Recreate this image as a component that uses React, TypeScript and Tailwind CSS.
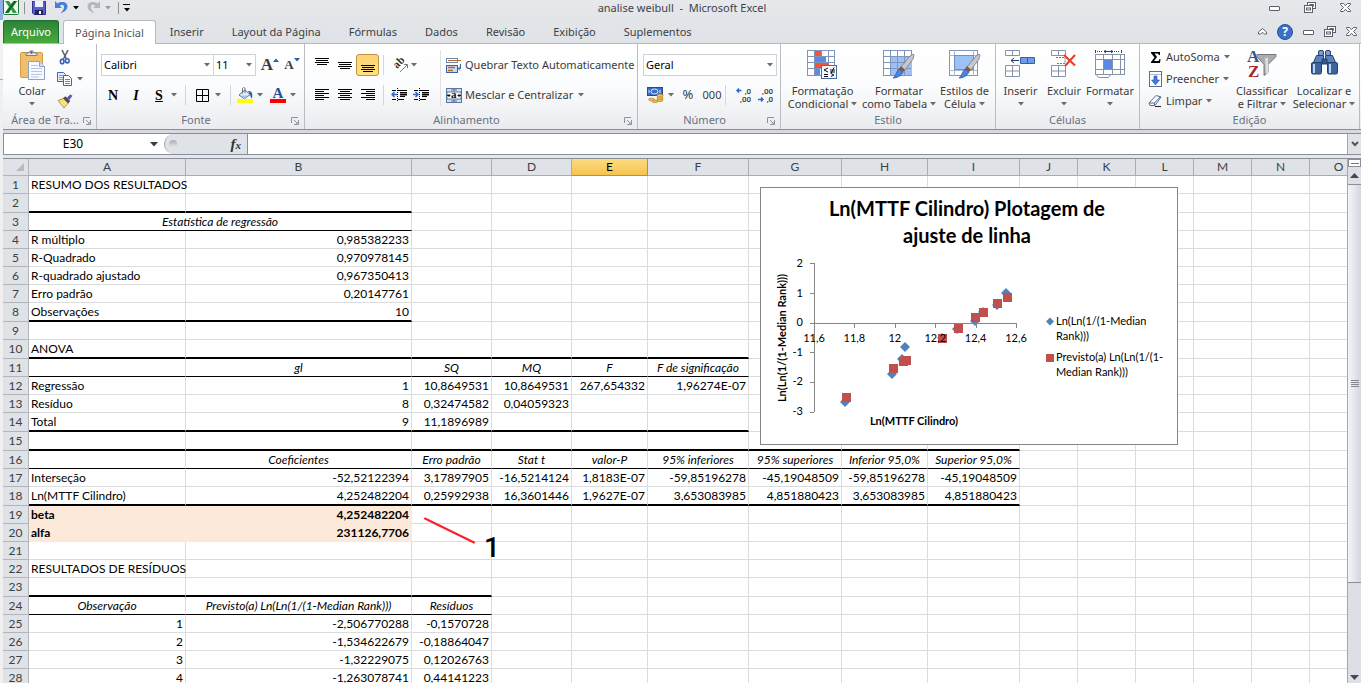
// src/App.tsx
import React from 'react';

/* ---------- small pieces ---------- */

const Arrow = ({ className = 'text-[#6b6b6b]' }: { className?: string }) => (
  <svg width="6" height="4" viewBox="0 0 6 4" className={`shrink-0 ${className}`} aria-hidden="true">
    <path d="M0 0h6L3 3.5z" fill="currentColor" />
  </svg>
);

const Sep = () => (
  <div className="w-px h-5 shrink-0 bg-[#d3d6da]" />
);

interface IconButtonProps {
  label: string;
  className: string;
  children: React.ReactNode;
}

function IconButton({ label, className, children }: IconButtonProps) {
  return (
    <button aria-label={label} className={`h-[22px] shrink-0 flex items-center justify-center ${className}`}>
      {children}
    </button>
  );
}

interface BigButtonProps {
  icon: React.ReactNode;
  lines: string[];
  className: string;
}

// Tall ribbon button: icon, one or two lines, drop arrow
function BigButton({ icon, lines, className }: BigButtonProps) {
  const two = lines.length > 1;
  return (
    <button className={`flex flex-col items-center shrink-0 pt-1.5 leading-[13px] whitespace-nowrap ${className}`}>
      <span className="h-[34px] flex items-start justify-center">{icon}</span>
      <span>{lines[0]}</span>
      <span className="h-[13px] flex items-center gap-[3px]">
        {two && lines[1]}
        <Arrow />
      </span>
    </button>
  );
}

interface GroupProps {
  title: string;
  className: string;
  launcher?: boolean;
  children: React.ReactNode;
}

function Group({ title, className, launcher, children }: GroupProps) {
  return (
    <section aria-label={title} className={`flex flex-col shrink-0 border-r border-[#b9bdc3] ${className}`}>
      <div className="h-[68px] flex">{children}</div>
      <div className="h-[17px] flex items-center px-1 text-[#6a7180]">
        <span className="flex-1 text-center whitespace-nowrap">{title}</span>
        {launcher && (
          <button aria-label={`Opções de ${title}`} className="pr-px">
            <svg width="8" height="8" viewBox="0 0 8 8" fill="none" stroke="#8d929b">
              <path d="M.5 6V.5H7M3 3l3 3M7.5 3v4.5H3M7 5v2H5" />
            </svg>
          </button>
        )}
      </div>
    </section>
  );
}

interface ComboProps {
  label: string;
  value: string;
  className: string;
}

function Combo({ label, value, className }: ComboProps) {
  return (
    <div className={`relative h-[22px] shrink-0 ${className}`}>
      <select
        aria-label={label}
        defaultValue={value}
        className="appearance-none w-full h-full pl-0.5 bg-white border border-[#cfd2d6] text-black"
      >
        <option>{value}</option>
      </select>
      <Arrow className="absolute right-1 top-[9px] text-[#6b6b6b] pointer-events-none" />
    </div>
  );
}

/* ---------- icons ---------- */

const ExcelIcon = () => (
  <svg width="16" height="15" viewBox="0 0 16 15" aria-hidden="true">
    <rect x=".5" y="-1" width="15" height="15.5" rx="1" fill="#f3faf3" stroke="#1f7a3a" />
    <path d="M2 1h4l2 3 2.500-3H14L10 7l4 6h-4L8 9.500 6 13H2l4-6z" fill="#2f9a41" />
    <path d="M14 1h-3L2 13h3z" fill="#17662c" />
  </svg>
);

const SaveIcon = () => (
  <svg width="14" height="14" viewBox="0 0 14 14" aria-hidden="true">
    <path d="M.5 0h13v13.500H2L.5 12z" fill="#5a5fc8" stroke="#32359a" />
    <rect x="3" y="0" width="8" height="6" fill="#eef2fb" />
    <rect x="3" y="9" width="8" height="5" fill="#23265c" />
    <rect x="7" y="10" width="2" height="3" fill="#fff" />
  </svg>
);

const UndoIcon = ({ color }: { color: string }) => (
  <svg width="13" height="13" viewBox="0 0 13 13" aria-hidden="true">
    <path d="M0 0v7h7L4.800 5C6.500 3.200 9 3.500 9 6c0 2-1 3.500-3.500 6.500C10 10.500 12.500 8.500 12.500 5.500 12.500.5 6 0 2.400 2.400z" fill={color} />
  </svg>
);

const MinIcon = () => (
  <svg width="11" height="11" viewBox="0 0 11 11" fill="#fff" stroke="#5b5f66" aria-hidden="true">
    <rect x=".5" y="4.500" width="10" height="4" rx=".5" />
  </svg>
);

const RestoreIcon = () => (
  <svg width="12" height="11" viewBox="0 0 12 11" fill="#fff" stroke="#5b5f66" aria-hidden="true">
    <rect x="3.500" y=".5" width="8" height="6" />
    <path d="M5.500 2.500h4v2" />
    <rect x=".5" y="3.500" width="8" height="7" />
    <rect x="2.500" y="6" width="4" height="2" />
  </svg>
);

const CloseIcon = () => (
  <svg width="11" height="9" viewBox="0 0 11 9" fill="#fff" stroke="#5b5f66" aria-hidden="true">
    <path d="M.5.5h3l2 2.200 2-2.200h3v1L7.500 4.500l3 3v1h-3l-2-2.200-2 2.200h-3v-1l3-3-3-3z" />
  </svg>
);

const PasteIcon = () => (
  <svg width="28" height="31" viewBox="0 0 28 31" aria-hidden="true">
    <rect x="2.500" y="2.500" width="22" height="25" rx="1.500" fill="#efc069" stroke="#d39c45" />
    <path d="M8 5.500V3h3c0-3 5-3 5 0h3v2.500z" fill="#e4e6ea" stroke="#7c8087" />
    <circle cx="13.500" cy="2.500" r="1.200" fill="#555" />
    <path d="M10.500 11.500h11l5 5v13h-16z" fill="#f6f9ff" stroke="#8ea3c4" />
    <path d="M21.500 11.500v5h5" fill="#d4dff2" stroke="#8ea3c4" />
    <path d="M13 15.500h7M13 18.500h11M13 21.500h11M13 24.500h11M13 27h8" stroke="#b9c6dd" />
  </svg>
);

const CutIcon = () => (
  <svg width="12" height="15" viewBox="0 0 12 15" fill="none" aria-hidden="true">
    <path d="M3 0l4.500 9M9 0L4.500 9" stroke="#59636f" strokeWidth="1.600" />
    <ellipse cx="3.200" cy="11.500" rx="1.800" ry="2.300" stroke="#3560b5" strokeWidth="1.600" />
    <ellipse cx="8.300" cy="10.800" rx="1.800" ry="2.100" stroke="#3560b5" strokeWidth="1.600" />
  </svg>
);

const CopyIcon = () => (
  <svg width="16" height="14" viewBox="0 0 16 14" stroke="#3f67b0" aria-hidden="true">
    <path d="M.5.500h6l2 2v7h-8z" fill="#e7effb" />
    <path d="M2 3.500h4M2 5.500h4M2 7.500h4" stroke="#7ba0dc" />
    <path d="M6.500 3.500h5l3 3v7h-8z" fill="#fff" />
    <path d="M8 7.500h5M8 9.500h5M8 11.500h5" stroke="#5b86d0" />
  </svg>
);

const BrushIcon = () => (
  <svg width="17" height="15" viewBox="0 0 17 15" aria-hidden="true">
    <path d="M1 6.500l6-2.500 5 5-4.500 5.500z" fill="#f0d878" stroke="#b99a3f" />
    <path d="M4 8l4 4M6 7l4 4" stroke="#fbf0b8" />
    <path d="M6.500 4L9 2l5 5-2 2.500z" fill="#4d4a45" />
    <path d="M10.500 3.500L14 0l2.500 1.500L13 6z" fill="#5d57b4" />
  </svg>
);

const BordersIcon = () => (
  <svg width="13" height="13" viewBox="0 0 13 13" fill="none" stroke="#000" aria-hidden="true">
    <path d="M.5.500h12v12H.5zM6.500.500v12M.5 6.500h12" />
  </svg>
);

const FillIcon = () => (
  <svg width="16" height="16" viewBox="0 0 16 16" aria-hidden="true">
    <path d="M2 8L8 3l5 4.500L7.500 12z" fill="#e4ecf8" stroke="#53749f" />
    <path d="M3.500 8.500h8L7.500 12z" fill="#a9c1e6" />
    <path d="M5.500 6.500V2c0-2 2.500-2 2.500 0v4" fill="none" stroke="#6a6f77" />
    <path d="M11 4c4-.5 5 3 4 7.500-1-.5-1.500-2-2-4z" fill="#2f5fae" />
    <rect y="12" width="16" height="4" fill="#ff0" />
  </svg>
);

const FontColorIcon = () => (
  <span className="flex flex-col items-center w-4">
    <span className="font-['Liberation_Serif'] font-bold text-[15px] leading-[12px] text-[#2c4f8f]">A</span>
    <span className="w-4 h-1 bg-[#f00]" />
  </span>
);

const VAlignIcon = ({ y }: { y: number }) => (
  <svg width="14" height="16" viewBox="0 0 14 16" stroke="#000" aria-hidden="true">
    <path d={`M0 ${y}.5h14M1 ${y + 2}.5h12M0 ${y + 4}.5h14M2 ${y + 6}.5h10`} />
  </svg>
);

// d holds the short lines, which differ by side
const HAlignIcon = ({ d }: { d: string }) => (
  <svg width="14" height="12" viewBox="0 0 14 12" stroke="#000" aria-hidden="true">
    <path d={`M0 .5h14M0 4.500h14M0 8.500h14${d}`} />
  </svg>
);

const OrientIcon = () => (
  <svg width="17" height="16" viewBox="0 0 17 16" className="overflow-visible" aria-hidden="true">
    <text x="0" y="0" fontFamily="Liberation Serif, serif" fontWeight="bold" fontSize="11" fill="#333" transform="translate(5 12) rotate(-45)">ab</text>
    <path d="M8 15l7-7M15.500 11V7.500H12" fill="none" stroke="#777" />
  </svg>
);

const IndentIcon = ({ right }: { right?: boolean }) => (
  <svg width="16" height="14" viewBox="0 0 16 14" stroke="#000" aria-hidden="true">
    <path d="M1 2.500h4M7 2.500h9M1 11.500h4M7 11.500h6M9 4.500h7M9 8.500h5" />
    <path d="M9 6.500h7" strokeWidth="2" />
    <path d="M6.500 0v14" strokeDasharray="1 1" />
    <path d={right ? 'M0 6.500h5M2.500 4L5 6.500 2.500 9' : 'M6 6.500H1M3.500 4L1 6.500 3.500 9'} stroke="#2f68c8" strokeWidth="1.500" fill="none" />
  </svg>
);

const WrapIcon = () => (
  <svg width="16" height="15" viewBox="0 0 16 15" aria-hidden="true">
    <rect x=".5" y=".5" width="11" height="4" fill="#fff" stroke="#6f86ab" />
    <path d="M2 2.500h13" stroke="#b06a35" />
    <rect x=".5" y="7.500" width="11" height="7" fill="#cbdcf5" stroke="#3d5f9c" />
    <path d="M2 9.500h7M2 12.500h5" stroke="#b06a35" strokeWidth="1.500" />
    <path d="M14.500 6v4.500h-2M14 8.500l-2 2 2 2" stroke="#2f5fa8" fill="none" />
  </svg>
);

const MergeIcon = () => (
  <svg width="16" height="15" viewBox="0 0 16 15" aria-hidden="true">
    <rect x=".5" y=".5" width="15" height="14" fill="#cfe0f7" stroke="#5a759f" />
    <path d="M8 .5v3M8 11.500v3M5 2h6M5 13h6" stroke="#5a759f" />
    <rect x="1" y="4" width="14" height="7" fill="#fff" stroke="#5a759f" />
    <text x="5" y="10" fontFamily="Liberation Serif, serif" fontWeight="bold" fontSize="11" fill="#111">a</text>
    <path d="M1 7.500h3M2.500 6L4 7.500 2.500 9M15 7.500h-3M13.500 6L12 7.500 13.500 9" stroke="#111" fill="none" />
  </svg>
);

const MoneyIcon = () => (
  <svg width="17" height="16" viewBox="0 0 17 16" aria-hidden="true">
    <rect x=".5" y=".5" width="15" height="8" fill="#3e6fc2" stroke="#28498c" />
    <ellipse cx="7.500" cy="4.500" rx="3.500" ry="2.500" fill="none" stroke="#d7e4fa" />
    <path d="M2 3v3M13 3v3" stroke="#d7e4fa" />
    <g fill="#f3c64b" stroke="#b17a14" strokeWidth=".7">
      <ellipse cx="13" cy="13" rx="3" ry="1.500" />
      <ellipse cx="13" cy="10.800" rx="3" ry="1.500" />
      <ellipse cx="13" cy="8.500" rx="3" ry="1.500" />
      <ellipse cx="4.500" cy="12.500" rx="3" ry="1.300" />
      <ellipse cx="8" cy="14.300" rx="3" ry="1.300" />
    </g>
  </svg>
);

const DecimalIcon = ({ more }: { more?: boolean }) => (
  <svg width="17" height="18" viewBox="0 0 17 18" className="overflow-visible" aria-hidden="true">
    <g fontFamily="Roboto, sans-serif" fontSize="8" fontWeight="500" fill="#333">
      <text x="16" y="8" textAnchor="end">{more ? ',0' : ',00'}</text>
      <text x="16" y="16" textAnchor="end">{more ? ',00' : ',0'}</text>
    </g>
    <path d={more ? 'M6.500 4.500H2M4 2.500L2 4.500l2 2' : 'M1 13.500h5M4 11.500l2 2-2 2'} stroke="#2f68c8" strokeWidth="1.500" fill="none" />
  </svg>
);

const PaintBrush = () => (
  <g>
    <path d="M27 6l3-2 1 1-1 4-8 11-4-3z" fill="#c5c9cf" stroke="#777b83" strokeWidth=".8" />
    <path d="M18 16l4 4-2 2-4-3z" fill="#8a5a2c" />
    <path d="M16 19l4 3c-2 4-6 6-10 6 3-2 3-6 6-9z" fill="#4f83dc" stroke="#2b56a4" strokeWidth=".8" />
  </g>
);

const CondIcon = () => (
  <svg width="31" height="30" viewBox="0 0 31 30" aria-hidden="true">
    <rect x=".5" y=".5" width="27" height="25" fill="#fff" stroke="#7f95bb" />
    <rect x="8" y="1" width="6" height="6" fill="#f4523d" />
    <rect x="8" y="7" width="11" height="6" fill="#5a8be0" />
    <rect x="8" y="13" width="14" height="6" fill="#f4523d" />
    <rect x="8" y="19" width="5" height="6" fill="#5a8be0" />
    <path d="M7.500 0v26M14.500 0v7M21.500 0v13M0 6.500h28M0 12.500h28M0 18.500h28" stroke="#7f95bb" fill="none" />
    <rect x="14.500" y="15.500" width="15" height="13" fill="#f4f8ff" stroke="#4d6b9e" />
    <path d="M21 18l-4 2 4 2M17 24.500h4M17 26.500h4M23 20h5M23 22h5M27 17.500l-3 6M24 23.500l3 1.500-3 1.500" stroke="#111" fill="none" />
  </svg>
);

const FmtTableIcon = () => (
  <svg width="32" height="30" viewBox="0 0 32 30" aria-hidden="true">
    <rect x=".5" y=".5" width="28" height="25" fill="#fff" stroke="#7f95bb" />
    <rect x="8" y="7" width="21" height="18" fill="#9dc0f5" />
    <path d="M7.500 0v26M14.500 0v26M21.500 0v26M0 6.500h28M0 12.500h28M0 18.500h28" stroke="#7f95bb" />
    <PaintBrush />
  </svg>
);

const CellStyleIcon = () => (
  <svg width="32" height="30" viewBox="0 0 32 30" aria-hidden="true">
    <rect x=".5" y=".5" width="28" height="25" fill="#fff" stroke="#7f95bb" />
    <path d="M5.500 0v26M24.500 0v26M0 5.500h28M0 20.500h28" stroke="#a9b8d2" />
    <rect x="5.500" y="5.500" width="19" height="14" fill="#9dc0f5" stroke="#6a90d0" />
    <PaintBrush />
  </svg>
);

const InsertIcon = () => (
  <svg width="31" height="28" viewBox="0 0 31 28" fill="#fff" stroke="#8592a8" aria-hidden="true">
    <path d="M.5.500h14v5H.5zM7.500.500v5M.5 15.500h14v11H.5zM7.500 15.500v11M.5 21h14" />
    <path d="M15.500 7.500h14v6h-14zM22.500 7.500v6" fill="#6f9ce8" stroke="#39609f" />
    <path d="M6 10.500h8M9 8l-3 2.500L9 13" stroke="#1f3c6d" fill="none" />
  </svg>
);

const DeleteIcon = () => (
  <svg width="26" height="28" viewBox="0 0 26 28" fill="#fff" stroke="#8592a8" aria-hidden="true">
    <path d="M.5.500h14v5H.5zM7.500.500v5M.5 15.500h14v11H.5zM7.500 15.500v11M.5 21h14" />
    <path d="M5 7.500h9v6H5" strokeDasharray="2 1" stroke="#4a78c8" />
    <path d="M13 5l11 10.500M24 5L14 16" stroke="#f03a20" strokeWidth="2" fill="none" />
  </svg>
);

const FormatCellIcon = () => (
  <svg width="32" height="30" viewBox="0 0 32 30" fill="none" aria-hidden="true">
    <path d="M1.500 0v3M27.500 0v3" stroke="#33425e" />
    <path d="M3 1.500h6M20 1.500h6" stroke="#33425e" strokeDasharray="1 1" />
    <path d="M10 1.500h9M12 0l-2 1.500L12 3M17 0l2 1.500L17 3" stroke="#33425e" />
    <rect x="1.500" y="4.500" width="29" height="20" fill="#fff" stroke="#8592a8" />
    <path d="M1.500 9.500h29M1.500 19.500h29M9.500 4.500v20M18.500 4.500v20M26.500 4.500v20" stroke="#8592a8" />
    <rect x="10" y="10" width="8" height="9" fill="#5a8be0" />
    <path d="M2.500 24.500l2 3h10l2-3z" fill="#fff" stroke="#8592a8" />
  </svg>
);

const SumIcon = () => (
  <svg width="11" height="11" viewBox="0 0 11 11" aria-hidden="true">
    <path d="M1 0h9v3H9C8.500 1.500 8 1.500 4.500 1.500L7 5 4 9h3c2 0 2-.5 2.500-2h1L10 11H1v-1l3.500-4.500L1 1z" />
  </svg>
);

const DownFillIcon = () => (
  <svg width="13" height="16" viewBox="0 0 13 16" aria-hidden="true">
    <rect x=".5" y=".5" width="12" height="15" fill="#fff" stroke="#54709f" />
    <path d="M1 3.500h11" stroke="#a8bad8" />
    <path d="M5 5h3v4h2.500l-4 5-4-5H5z" fill="#3f7ae0" stroke="#2453a6" strokeWidth=".6" />
  </svg>
);

const EraserIcon = () => (
  <svg width="14" height="12" viewBox="0 0 14 12" aria-hidden="true">
    <path d="M1 8l7-7.500 5 1.500-6 8.500H2z" fill="#f8faff" stroke="#5a6d90" />
    <path d="M1 8h5.500l6-6.500M6.500 8v3" fill="none" stroke="#5a6d90" />
    <path d="M7 11.500h6" stroke="#222" />
  </svg>
);

const SortIcon = () => (
  <svg width="30" height="29" viewBox="0 0 30 29" className="overflow-visible" aria-hidden="true">
    <g fontFamily="Liberation Serif, serif" fontWeight="bold" fontSize="17">
      <text x="0" y="12" fill="#2b5592">A</text>
      <text x="1" y="27" fill="#a32b2b">Z</text>
    </g>
    <path d="M10 4.500h19v2l-8 8v8l-4 3v-11l-7-8z" fill="#a9acb0" stroke="#74777c" />
    <path d="M18 8h3v15l-2 1z" fill="#dcdee1" />
  </svg>
);

const FindIcon = () => (
  <svg width="27" height="25" viewBox="0 0 27 25" stroke="#24426e" aria-hidden="true">
    <rect x="7.500" y=".5" width="5" height="5" rx="1.500" fill="#7fa0cf" />
    <rect x="14.500" y=".5" width="5" height="5" rx="1.500" fill="#7fa0cf" />
    <path d="M5.500 5.500h7v7h-10zM14.500 5.500h7l3 7h-10z" fill="#5c82bb" />
    <rect x=".5" y="12.500" width="10" height="11.500" rx="1.500" fill="#3e649f" />
    <rect x="16.500" y="12.500" width="10" height="11.500" rx="1.500" fill="#3e649f" />
    <path d="M3 14v9M19 14v9" stroke="#c3d4ee" strokeWidth="2" />
    <path d="M11 9h5v5h-5z" fill="#35578c" />
  </svg>
);

/* ---------- ribbon ---------- */

const tabs = ['Inserir', 'Layout da Página', 'Fórmulas', 'Dados', 'Revisão', 'Exibição', 'Suplementos'];

function TitleBar() {
  return (
    <header className="flex items-start justify-between h-5 shrink-0">
      <div className="flex items-center h-[15px] flex-1 pr-[10px]">
        <ExcelIcon />
        <div className="w-px h-3 bg-[#8d9198] ml-[5px]" />
        <button aria-label="Salvar" className="ml-[7px]"><SaveIcon /></button>
        <button aria-label="Desfazer" className="ml-[9px] flex items-center gap-[5px]">
          <UndoIcon color="#4a7fd6" /><Arrow className="text-black" />
        </button>
        <button aria-label="Refazer" className="ml-2 flex items-center gap-[5px]">
          <span className="-scale-x-100"><UndoIcon color="#b4b8be" /></span><Arrow className="text-[#9a9da2]" />
        </button>
        <div className="w-px h-3 bg-[#8d9198] ml-[7px]" />
        <button aria-label="Personalizar" className="ml-1 flex flex-col items-center gap-[3px]">
          <span className="w-[7px] h-px bg-black" /><Arrow className="text-black" />
        </button>
      </div>
      <h1 className="leading-[16px] text-[#3f4349] whitespace-pre">analise weibull  -  Microsoft Excel</h1>
      <div className="flex-1 flex items-center justify-end gap-6 pr-[10px] h-[15px]">
        <button aria-label="Minimizar"><MinIcon /></button>
        <button aria-label="Restaurar"><RestoreIcon /></button>
        <button aria-label="Fechar"><CloseIcon /></button>
      </div>
    </header>
  );
}

function TabRow() {
  return (
    <nav className="flex h-[23px] shrink-0 leading-[23px] text-[#3b3f45] whitespace-nowrap">
      <button className="w-14 rounded-t-[3px] border border-b-0 border-[#1c6f33] bg-linear-to-b from-[#2f8238] to-[#46ab3c] text-white leading-[22px]">
        Arquivo
      </button>
      <button className="h-6 ml-1 px-[11px] rounded-t-[3px] border border-b-0 border-[#b6babf] bg-white text-[#4c5560] leading-[22px] relative">
        Página Inicial
      </button>
      {tabs.map(tab => (
        <button key={tab} className="px-3.5">{tab}</button>
      ))}
      <div className="flex-1 flex items-center justify-end gap-[10px] pr-1">
        <button aria-label="Minimizar faixa">
          <svg width="9" height="7" viewBox="0 0 9 7" fill="#fff" stroke="#5b5f66"><path d="M.5 4l4-3.500 4 3.500v2h-2L4.500 4.500l-2 1.500h-2z" /></svg>
        </button>
        <button aria-label="Ajuda" className="w-4 h-4 rounded-full bg-[#3b70c4] border border-[#2a5297] text-white font-bold text-[12px] leading-[14px] text-center">?</button>
        <button aria-label="Minimizar pasta"><MinIcon /></button>
        <button aria-label="Restaurar pasta"><RestoreIcon /></button>
        <button aria-label="Fechar pasta"><CloseIcon /></button>
      </div>
    </nav>
  );
}

function Ribbon() {
  return (
    <div className="flex h-[86px] shrink-0 border-t border-[#b6babf] bg-linear-to-b from-white via-[#fbfcfd] to-[#e9ebef] text-[#3b3b3b] overflow-hidden">
      <Group title="Área de Tra..." className="w-[94px]" launcher>
        <BigButton icon={<PasteIcon />} lines={['Colar']} className="w-[58px]" />
        <div className="flex flex-col pt-0.5 -ml-1">
          <IconButton label="Recortar" className="w-4"><CutIcon /></IconButton>
          <IconButton label="Copiar" className="gap-1"><CopyIcon /><Arrow /></IconButton>
          <IconButton label="Pincel" className="w-4"><BrushIcon /></IconButton>
        </div>
      </Group>

      <Group title="Fonte" className="w-[208px]" launcher>
        <div className="flex flex-col gap-2 pt-2.5 pl-1">
          <div className="flex items-center">
            <Combo label="Fonte" value="Calibri" className="w-[113px]" />
            <Combo label="Tamanho" value="11" className="w-[43px] -ml-px" />
            <IconButton label="Aumentar fonte" className="w-5 ml-1">
              <span className="font-['Liberation_Serif'] font-bold text-[17px] leading-[20px]">A</span>
              <span className="self-start text-[#2f5fa8] -scale-y-100 pb-1"><Arrow className="text-[#2f5fa8]" /></span>
            </IconButton>
            <IconButton label="Diminuir fonte" className="w-6">
              <span className="font-['Liberation_Serif'] font-bold text-[13px] leading-[20px]">A</span>
              <span className="self-start pt-1"><Arrow className="text-[#2f5fa8]" /></span>
            </IconButton>
          </div>
          <div className="flex items-center font-['Liberation_Serif'] text-[14px] text-black">
            <IconButton label="Negrito" className="w-6 font-bold">N</IconButton>
            <IconButton label="Itálico" className="w-[22px] font-bold italic">I</IconButton>
            <IconButton label="Sublinhado" className="w-[38px] gap-2 font-bold underline">S<Arrow /></IconButton>
            <Sep />
            <IconButton label="Bordas" className="w-11 gap-1.5"><BordersIcon /><Arrow /></IconButton>
            <Sep />
            <IconButton label="Preenchimento" className="w-9 gap-1 pl-0.5"><FillIcon /><Arrow /></IconButton>
            <IconButton label="Cor da fonte" className="w-8 gap-1"><FontColorIcon /><Arrow /></IconButton>
          </div>
        </div>
      </Group>

      <Group title="Alinhamento" className="w-[333px]" launcher>
        <div className="flex flex-col gap-2 pt-2.5 pl-[5px]">
          <div className="flex items-center">
            <IconButton label="Superior" className="w-[23px]"><VAlignIcon y={1} /></IconButton>
            <IconButton label="Meio" className="w-[23px]"><VAlignIcon y={5} /></IconButton>
            <IconButton label="Inferior" className="w-[23px] rounded-[3px] border border-[#c2913c] bg-linear-to-b from-[#fcd376] to-[#fee27e]"><VAlignIcon y={8} /></IconButton>
            <span className="w-1" />
            <Sep />
            <IconButton label="Orientação" className="w-10 gap-0.5"><OrientIcon /><Arrow /></IconButton>
          </div>
          <div className="flex items-center">
            <IconButton label="Esquerda" className="w-[23px]"><HAlignIcon d="M0 2.500h9M0 6.500h9M0 10.500h9" /></IconButton>
            <IconButton label="Centro" className="w-[23px]"><HAlignIcon d="M2 2.500h10M2 6.500h10M2 10.500h10" /></IconButton>
            <IconButton label="Direita" className="w-[23px]"><HAlignIcon d="M5 2.500h9M5 6.500h9M5 10.500h9" /></IconButton>
            <span className="w-1" />
            <Sep />
            <IconButton label="Diminuir recuo" className="w-[22px] ml-1"><IndentIcon /></IconButton>
            <IconButton label="Aumentar recuo" className="w-[22px]"><IndentIcon right /></IconButton>
          </div>
        </div>
        <div className="w-px h-14 mt-1.5 ml-2 bg-[#dfe1e5]" />
        <div className="flex flex-col items-start gap-2 pt-2.5 pl-[5px] whitespace-nowrap">
          <button className="h-[22px] flex items-center gap-[3px]"><WrapIcon />Quebrar Texto Automaticamente</button>
          <button className="h-[22px] flex items-center gap-[3px]"><MergeIcon />Mesclar e Centralizar<span className="pl-0.5"><Arrow /></span></button>
        </div>
      </Group>

      <Group title="Número" className="w-[143px]" launcher>
        <div className="flex flex-col gap-2 pt-2.5 pl-[5px]">
          <Combo label="Formato" value="Geral" className="w-[134px]" />
          <div className="flex items-center">
            <IconButton label="Moeda" className="w-[34px] gap-1"><MoneyIcon /><Arrow /></IconButton>
            <button className="w-[22px] text-[13px]">%</button>
            <button className="w-[26px]">000</button>
            <Sep />
            <IconButton label="Aumentar casas" className="w-[22px] ml-1.5"><DecimalIcon more /></IconButton>
            <IconButton label="Diminuir casas" className="w-[22px]"><DecimalIcon /></IconButton>
          </div>
        </div>
      </Group>

      <Group title="Estilo" className="w-[215px]">
        <BigButton icon={<CondIcon />} lines={['Formatação', 'Condicional']} className="w-[83px]" />
        <BigButton icon={<FmtTableIcon />} lines={['Formatar', 'como Tabela']} className="w-[70px]" />
        <BigButton icon={<CellStyleIcon />} lines={['Estilos de', 'Célula']} className="w-[61px]" />
      </Group>

      <Group title="Células" className="w-36">
        <BigButton icon={<InsertIcon />} lines={['Inserir']} className="w-[49px]" />
        <BigButton icon={<DeleteIcon />} lines={['Excluir']} className="w-[38px]" />
        <BigButton icon={<FormatCellIcon />} lines={['Formatar']} className="w-[54px]" />
      </Group>

      <Group title="Edição" className="w-[220px]">
        <div className="w-[91px] flex flex-col items-start pt-0.5 pl-2 whitespace-nowrap">
          <button className="h-[22px] flex items-center gap-1"><span className="w-3.5 flex justify-center"><SumIcon /></span>AutoSoma<Arrow /></button>
          <button className="h-[22px] flex items-center gap-1"><span className="w-3.5 flex justify-center"><DownFillIcon /></span>Preencher<Arrow /></button>
          <button className="h-[22px] flex items-center gap-1"><span className="w-3.5 flex justify-center"><EraserIcon /></span>Limpar<Arrow /></button>
        </div>
        <BigButton icon={<SortIcon />} lines={['Classificar', 'e Filtrar']} className="w-[62px]" />
        <BigButton icon={<FindIcon />} lines={['Localizar e', 'Selecionar']} className="w-[62px]" />
      </Group>
    </div>
  );
}

function FormulaBar() {
  return (
    <div className="shrink-0 border-t border-[#8a8e96] bg-[#d6dae0] pt-[3px]">
      <div className="flex h-[22px] border-y border-[#8a8e96] bg-[#dfe3e8]">
        <div className="w-[161px] flex items-center bg-white border-l border-[#8a8e96]">
          <input aria-label="Caixa de nome" defaultValue="E30" className="w-full min-w-0 pr-2 text-center text-black text-[12px] outline-none" />
          <button aria-label="Nomes" className="pr-1.5">
            <svg width="8" height="5" viewBox="0 0 8 5"><path d="M0 0h8L4 4.500z" fill="#3a3d42" /></svg>
          </button>
        </div>
        <div className="w-[84px] flex items-center justify-between bg-white border-r border-[#8a8e96]">
          <div className="flex-1 h-5 flex items-center justify-between rounded-l-full border-l border-[#a3a7ae] bg-[#dfe3e8] pl-1 pr-1.5">
            <span className="w-2 h-2 rounded-full bg-linear-to-b from-[#a9adb4] to-[#e8eaee]" />
            <button aria-label="Inserir função" className="font-['Liberation_Serif'] italic font-bold text-[15px] leading-[18px] text-[#333]">
              f<span className="text-[11px]">x</span>
            </button>
          </div>
        </div>
        <input aria-label="Barra de fórmulas" className="flex-1 min-w-0 bg-white outline-none" />
        <button aria-label="Expandir barra" className="w-[14px] flex items-center justify-center border-l border-[#a3a7ae] bg-[#dfe3e8]">
          <svg width="8" height="6" viewBox="0 0 8 6" fill="none" stroke="#555" strokeWidth="2"><path d="M1 1l3 3 3-3" /></svg>
        </button>
      </div>
      <div className="h-[3px] bg-[#e4e6f1]" />
    </div>
  );
}

/* ---------- sheet ---------- */

interface CellData {
  v: string;
  c?: 'i' | 'l' | 'b' | 'bl'; // italic centred, left, bold right, bold left; default is right
  span?: number;
}

interface RowData {
  cells?: (CellData | null)[];
  rule?: 'thin' | 'thick';
  upTo?: number; // columns the rule runs across
  tall?: boolean;
  fill?: boolean;
}

const l = (v: string): CellData => ({ v, c: 'l' });
const n = (v: string): CellData => ({ v });
const i = (v: string, span = 1): CellData => ({ v, c: 'i', span });

const rows: RowData[] = [
  { cells: [l('RESUMO DOS RESULTADOS')] },
  { rule: 'thick', upTo: 2, tall: true },
  { cells: [i('Estatística de regressão', 2)], rule: 'thin', upTo: 2 },
  { cells: [l('R múltiplo'), n('0,985382233')] },
  { cells: [l('R-Quadrado'), n('0,970978145')] },
  { cells: [l('R-quadrado ajustado'), n('0,967350413')] },
  { cells: [l('Erro padrão'), n('0,20147761')] },
  { cells: [l('Observações'), n('10')], rule: 'thick', upTo: 2, tall: true },
  {},
  { cells: [l('ANOVA')], rule: 'thick', upTo: 6, tall: true },
  { cells: [null, i('gl'), i('SQ'), i('MQ'), i('F'), i('F de significação')], rule: 'thin', upTo: 6 },
  { cells: [l('Regressão'), n('1'), n('10,8649531'), n('10,8649531'), n('267,654332'), n('1,96274E-07')] },
  { cells: [l('Resíduo'), n('8'), n('0,32474582'), n('0,04059323')] },
  { cells: [l('Total'), n('9'), n('11,1896989')], rule: 'thick', upTo: 6, tall: true },
  { rule: 'thick', upTo: 9, tall: true },
  {
    cells: [
      null, i('Coeficientes'), i('Erro padrão'), i('Stat t'), i('valor-P'),
      i('95% inferiores'), i('95% superiores'), i('Inferior 95,0%'), i('Superior 95,0%'),
    ],
    rule: 'thin',
    upTo: 9,
  },
  {
    cells: [
      l('Interseção'), n('-52,52122394'), n('3,17897905'), n('-16,5214124'), n('1,8183E-07'),
      n('-59,85196278'), n('-45,19048509'), n('-59,85196278'), n('-45,19048509'),
    ],
  },
  {
    cells: [
      l('Ln(MTTF Cilindro)'), n('4,252482204'), n('0,25992938'), n('16,3601446'), n('1,9627E-07'),
      n('3,653083985'), n('4,851880423'), n('3,653083985'), n('4,851880423'),
    ],
    rule: 'thick',
    upTo: 9,
    tall: true,
  },
  { cells: [{ v: 'beta', c: 'bl' }, { v: '4,252482204', c: 'b' }], fill: true },
  { cells: [{ v: 'alfa', c: 'bl' }, { v: '231126,7706', c: 'b' }], fill: true },
  {},
  { cells: [l('RESULTADOS DE RESÍDUOS')] },
  { rule: 'thick', upTo: 3, tall: true },
  { cells: [i('Observação'), i('Previsto(a) Ln(Ln(1/(1-Median Rank)))'), i('Resíduos')], rule: 'thin', upTo: 3 },
  { cells: [n('1'), n('-2,506770288'), n('-0,1570728')] },
  { cells: [n('2'), n('-1,534622679'), n('-0,18864047')] },
  { cells: [n('3'), n('-1,32229075'), n('0,12026763')] },
  { cells: [n('4'), n('-1,263078741'), n('0,44141223')] },
];

const columns = [
  { name: 'A', w: 157 }, { name: 'B', w: 226 }, { name: 'C', w: 80 }, { name: 'D', w: 80 },
  { name: 'E', w: 76 }, { name: 'F', w: 101 }, { name: 'G', w: 93 }, { name: 'H', w: 86 },
  { name: 'I', w: 92 }, { name: 'J', w: 58 }, { name: 'K', w: 58 }, { name: 'L', w: 58 },
  { name: 'M', w: 58 }, { name: 'N', w: 58 }, { name: 'O', w: 58 },
];

const cellStyles = {
  i: 'italic text-center',
  l: 'text-left',
  b: 'font-bold text-right',
  bl: 'font-bold text-left',
};

function Row({ row, index }: { row: RowData; index: number }) {
  const { cells = [], rule, upTo = 0, tall, fill } = row;
  const tds: React.ReactNode[] = [];

  for (let col = 0; col < columns.length; col++) {
    const cell = cells[col];
    const span = cell?.span ?? 1;
    const ruled = col < upTo;
    const filled = fill && col < 2;

    const bottom = !ruled
      ? filled ? 'border-b border-b-[#fde9d9]' : 'border-b border-b-[#dadcdd]'
      : rule === 'thick' ? 'border-b-2 border-b-black' : 'border-b border-b-black';

    tds.push(
      <td
        key={col}
        colSpan={span}
        className={`px-0.5 border-r whitespace-nowrap ${bottom} ${filled ? 'bg-[#fde9d9] border-r-[#fde9d9]' : 'border-r-[#dadcdd]'} ${cell?.c ? cellStyles[cell.c] : 'text-right'}`}
      >
        {cell?.v}
      </td>
    );
    col += span - 1;
  }

  return (
    <tr className={tall ? 'h-[19px]' : 'h-[18px]'}>
      <th className="border-r border-b border-[#b1b5ba] bg-[#dfe3e8] font-normal text-[#3d4044]">{index + 1}</th>
      {tds}
    </tr>
  );
}

const ticksY = [2, 1, 0, -1, -2, -3];
const ticksX = ['11,6', '11,8', '12', '12,2', '12,4', '12,6'];

// marker centres in chart pixels
const actual = [[85, 215], [132, 187], [142, 172], [145, 160], [182, 151], [197, 142], [215, 134], [223, 125], [237, 118], [246, 106]];
const fitted = [[86, 211], [133, 182], [143, 175], [146, 174], [182, 152], [198, 142], [215, 131], [223, 126], [237, 117], [247, 111]];

function Chart() {
  return (
    <svg
      width="418"
      height="258"
      viewBox="0 0 418 258"
      fontFamily="Lato, sans-serif"
      fontSize="11"
      className="absolute left-[757px] top-7"
      role="img"
      aria-label="Ln(MTTF Cilindro) Plotagem de ajuste de linha"
    >
      <rect x=".5" y=".5" width="417" height="257" fill="#fff" stroke="#868686" />
      <g fontSize="20" fontWeight="bold" textAnchor="middle">
        <text x="207" y="29">Ln(MTTF Cilindro) Plotagem de</text>
        <text x="207" y="56">ajuste de linha</text>
      </g>

      {actual.map(([x, y], k) => (
        <path key={k} d={`M${x} ${y - 5}l5 5-5 5-5-5z`} fill="#4f81bd" />
      ))}
      {fitted.map(([x, y], k) => (
        <rect key={k} x={x - 4} y={y - 5} width="9" height="9" fill="#c0504d" />
      ))}

      <g stroke="#868686">
        <path d="M54.500 76v149M54 136.500h203" />
        {ticksY.map((t, k) => <path key={t} d={`M50 ${Math.round(76 + k * 29.8)}.5h4`} />)}
        {ticksX.map((t, k) => <path key={t} d={`M${Math.round(54 + k * 40.4)}.5 136v5`} />)}
      </g>

      {ticksY.map((t, k) => (
        <text key={t} x="43" y={80 + k * 29.6} textAnchor="end">{t}</text>
      ))}
      {ticksX.map((t, k) => (
        <text key={t} x={54 + k * 40.4} y="155" textAnchor="middle">{t}</text>
      ))}

      <g fontWeight="bold">
        <text x="154" y="238" textAnchor="middle">Ln(MTTF Cilindro)</text>
        <text transform="translate(26 151) rotate(-90)" textAnchor="middle">Ln(Ln(1/(1-Median Rank)))</text>
      </g>

      <path d="M290 130.500l4 4-4 4-4-4z" fill="#4f81bd" />
      <rect x="286" y="167" width="8" height="8" fill="#c0504d" />
      <text x="296" y="138">Ln(Ln(1/(1-Median</text>
      <text x="296" y="153">Rank)))</text>
      <text x="296" y="174">Previsto(a) Ln(Ln(1/(1-</text>
      <text x="296" y="189">Median Rank)))</text>
    </svg>
  );
}

function Sheet() {
  return (
    <div className="flex flex-1 min-h-0 border-t border-[#8a8e96]">
      <main className="relative flex-1 min-w-0 overflow-hidden bg-white font-['Lato',sans-serif] text-[12px] leading-[16px] text-black">
        <table className="table-fixed border-separate border-spacing-0 w-[1365px]">
          <colgroup>
            <col className="w-[26px]" />
            {columns.map(c => <col key={c.name} style={{ width: c.w }} />)}
          </colgroup>
          <thead>
            <tr className="h-[17px]">
              <th className="border-r border-b border-[#b1b5ba] bg-[#dfe3e8]">
                <svg width="8" height="8" viewBox="0 0 8 8" className="ml-auto mr-1"><path d="M8 0v8H0z" fill="#b7bbc1" /></svg>
              </th>
              {columns.map(c => (
                <th
                  key={c.name}
                  className={`border-r border-b font-normal ${c.name === 'E' ? 'border-[#c08f2f] bg-linear-to-b from-[#fbdc82] to-[#f7c34d] text-black' : 'border-[#a9adb3] bg-[#dfe3e8] text-[#3d4044]'}`}
                >
                  {c.name}
                </th>
              ))}
            </tr>
          </thead>
          <tbody>
            {rows.map((row, k) => <Row key={k} row={row} index={k} />)}
          </tbody>
        </table>

        <Chart />

        {/* Callout */}
        <svg width="56" height="30" viewBox="0 0 56 30" className="absolute left-[419px] top-[356px]" aria-hidden="true">
          <path d="M3 3.500l49 24" stroke="#f5202a" strokeWidth="2" strokeLinecap="round" />
        </svg>
        <span className="absolute left-[481px] top-[373px] font-['Roboto'] font-medium text-[28px] leading-[32px]">1</span>
      </main>

      {/* Vertical scroll bar */}
      <div className="w-[14px] shrink-0 flex flex-col bg-[#dce0e6] border-l border-[#a3a7ae]">
        <div className="h-2 shrink-0 border border-[#8a8e96] bg-white flex items-center justify-center"><span className="w-2 h-px bg-[#777]" /></div>
        <button aria-label="Rolar para cima" className="h-[17px] shrink-0 flex items-center justify-center">
          <svg width="9" height="5" viewBox="0 0 9 5"><path d="M0 5h9L4.500 0z" fill="#44474c" /></svg>
        </button>
        <div className="h-[399px] flex flex-col items-center justify-center gap-px border-y border-[#8a8e96] bg-linear-to-r from-[#f3f5f8] to-[#d3d7de]">
          <span className="w-2 h-px bg-[#85898f]" />
          <span className="w-2 h-px bg-[#85898f]" />
          <span className="w-2 h-px bg-[#85898f]" />
          <span className="w-2 h-px bg-[#85898f]" />
        </div>
        <div className="flex-1" />
        <button aria-label="Rolar para baixo" className="h-3 shrink-0 flex items-center justify-center">
          <svg width="9" height="5" viewBox="0 0 9 5"><path d="M0 0h9L4.500 5z" fill="#44474c" /></svg>
        </button>
      </div>
    </div>
  );
}

export default function App() {
  return (
    <div className="flex h-screen overflow-hidden font-['Noto_Sans',sans-serif] text-[11px]">
      {/* Edge of the window behind */}
      <div className="w-[3px] shrink-0 flex flex-col">
        <div className="h-5 bg-[#8fb0e2]" />
        <div className="h-[60px] bg-[#f1f1f1] border-b border-[#a8a8a8]" />
        <div className="flex-1 bg-[#f0f0f0]" />
      </div>
      <div className="flex-1 min-w-0 flex flex-col bg-linear-to-b from-[#e6e8eb] to-[#dfe2e6] bg-[length:100%_44px]">
        <TitleBar />
        <TabRow />
        <Ribbon />
        <FormulaBar />
        <Sheet />
      </div>
    </div>
  );
}
